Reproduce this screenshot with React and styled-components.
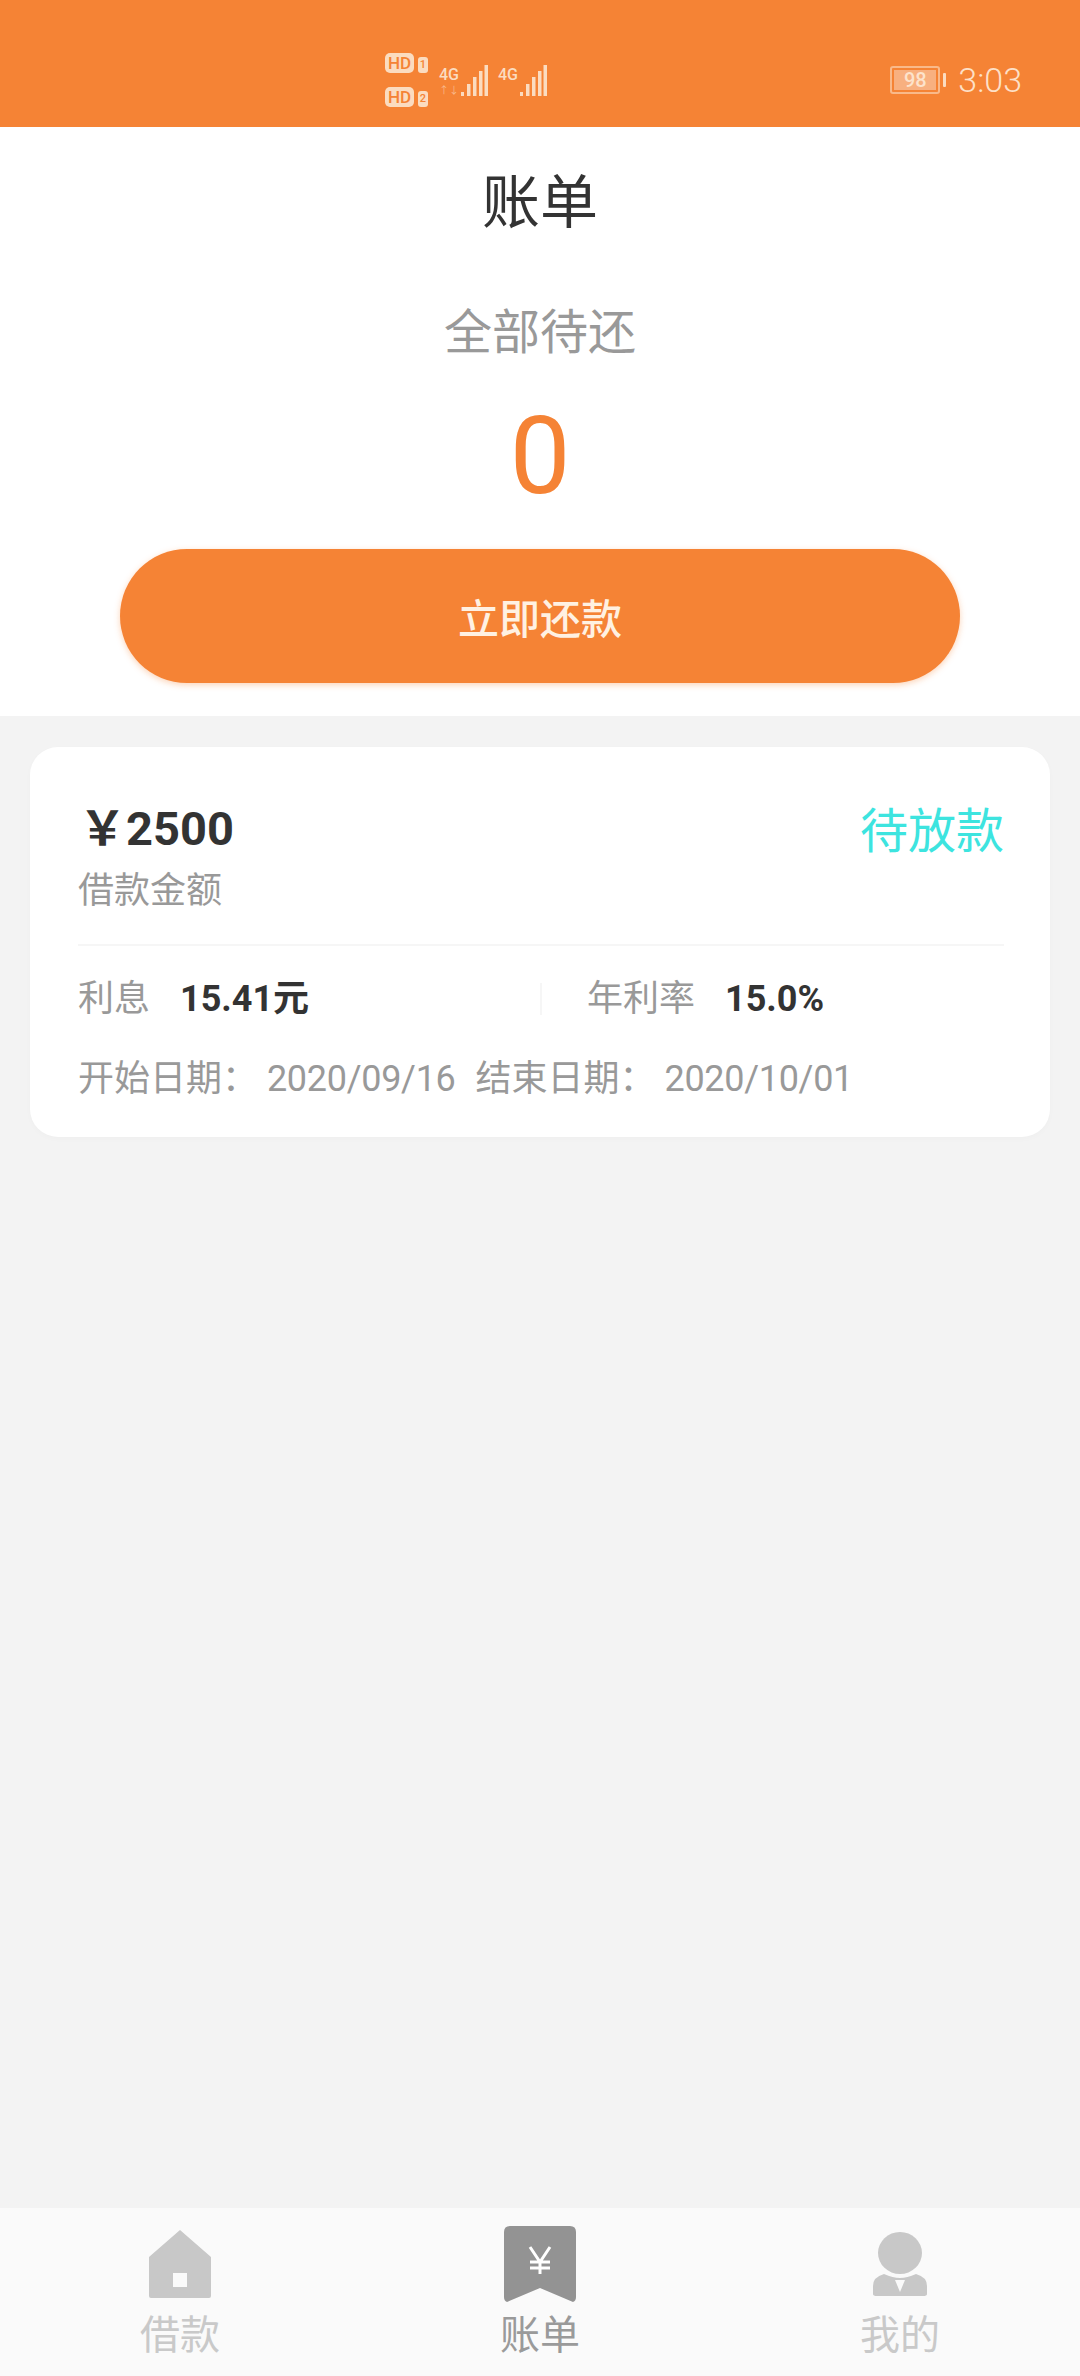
import React from "react";
import styled, { createGlobalStyle } from "styled-components";

const GlobalStyle = createGlobalStyle`
  html, body {
    margin: 0;
    padding: 0;
    background: #f3f3f3;
    font-family: Roboto, "Noto Sans CJK SC", sans-serif;
  }
`;

const ORANGE = "#f58335";

const Page = styled.div`
  width: 1080px;
  height: 2376px;
  display: flex;
  flex-direction: column;
  overflow: hidden;
`;

const StatusBar = styled.div`
  height: 127px;
  flex-shrink: 0;
  background: ${ORANGE};
  display: flex;
  align-items: center;
  justify-content: space-between;
  padding: 33px 58px 0 385px;
  box-sizing: border-box;
  color: #fbdcc0;
`;

const StatusLeft = styled.div`
  display: flex;
  align-items: center;
  gap: 11px;
`;

const SimColumn = styled.div`
  display: flex;
  flex-direction: column;
  gap: 14px;
  margin-right: 1px;
`;

const SimRow = styled.div`
  display: flex;
  align-items: flex-end;
  gap: 4px;
`;

const HdBadge = styled.span`
  width: 29px;
  height: 20px;
  border-radius: 5px;
  background: #fbdcc0;
  color: ${ORANGE};
  font-size: 17px;
  font-weight: 500;
  line-height: 20px;
  text-align: center;
`;

const SimNumber = styled.span`
  width: 10px;
  height: 16px;
  border-radius: 3px;
  background: #fbdcc0;
  color: ${ORANGE};
  font-size: 11px;
  font-weight: 500;
  line-height: 16px;
  text-align: center;
`;

const Signal = styled.div`
  display: flex;
  align-items: flex-start;
  gap: 3px;
  padding-top: 2px;
`;

const NetStack = styled.div`
  display: flex;
  flex-direction: column;
  align-items: center;
  width: 18px;
  padding-top: 2px;
`;

const NetLabel = styled.span`
  font-size: 16px;
  font-weight: 500;
  line-height: 16px;
`;

const NetActivity = styled.span`
  margin-top: 3px;
  font-size: 10px;
  line-height: 10px;
  color: #f9b98a;
`;

const StatusRight = styled.div`
  display: flex;
  align-items: center;
  gap: 12px;
`;

const Battery = styled.div`
  display: flex;
  align-items: center;
  gap: 3px;
`;

const BatteryBody = styled.div`
  width: 50px;
  height: 28px;
  box-sizing: border-box;
  padding: 2px;
  border: 2px solid #f9b98a;
  border-radius: 3px;
`;

const BatteryFill = styled.div`
  height: 100%;
  background: #f8b080;
  color: #fde3cc;
  font-size: 20px;
  font-weight: 500;
  line-height: 20px;
  text-align: center;
`;

const BatteryTip = styled.div`
  width: 3px;
  height: 14px;
  border-radius: 1px;
  background: #fbdcc0;
`;

const Clock = styled.span`
  font-size: 34px;
  font-weight: 300;
  line-height: 40px;
  color: #fde0c8;
`;

const Summary = styled.section`
  height: 589px;
  flex-shrink: 0;
  background: #fff;
  display: flex;
  flex-direction: column;
  align-items: center;
`;

const Title = styled.h1`
  margin: 43px 0 0;
  font-size: 58px;
  font-weight: 400;
  line-height: 66px;
  color: #333;
`;

const SummaryLabel = styled.div`
  margin-top: 67px;
  font-size: 48px;
  font-weight: 400;
  line-height: 60px;
  color: #999;
`;

const SummaryAmount = styled.div`
  margin-top: 30px;
  font-size: 108px;
  font-weight: 400;
  line-height: 126px;
  color: ${ORANGE};
`;

const PayButton = styled.button`
  width: 840px;
  height: 134px;
  margin-top: 30px;
  flex-shrink: 0;
  border: none;
  border-radius: 67px;
  background: ${ORANGE};
  box-shadow: 0 2px 6px rgba(245, 131, 53, 0.35);
  color: #fff1e2;
  font-family: inherit;
  font-size: 41px;
  font-weight: 500;
  padding: 0;
`;

const List = styled.main`
  flex: 1;
  padding: 31px 30px 0;
`;

const Card = styled.article`
  height: 390px;
  box-sizing: border-box;
  padding: 50px 46px 0 48px;
  background: #fff;
  border-radius: 28px;
  box-shadow: 0 2px 6px rgba(0, 0, 0, 0.02);
`;

const CardTop = styled.div`
  display: flex;
  justify-content: space-between;
  align-items: flex-start;
  padding-bottom: 30px;
  border-bottom: 2px solid #f6f6f6;
`;

const Amount = styled.div`
  font-size: 47px;
  font-weight: 700;
  line-height: 64px;
  color: #333;
  margin-left: -4px;
  padding-left: 5px;
`;

const AmountLabel = styled.div`
  margin-top: 7px;
  font-size: 36px;
  line-height: 46px;
  color: #999;
`;

const Status = styled.div`
  padding-top: 3px;
  font-size: 48px;
  line-height: 64px;
  color: #3de4df;
`;

const InfoRow = styled.div`
  display: flex;
  align-items: center;
  height: 76px;
  margin-top: 15px;
`;

const InfoCell = styled.div`
  display: flex;
  align-items: baseline;
  gap: ${(props) => props.$gap}px;
  width: ${(props) => props.$width}px;
  height: 32px;
  line-height: 32px;
  box-sizing: border-box;
  font-size: 36px;
  color: #999;
  white-space: nowrap;
  border-left: ${(props) => (props.$divided ? "2px solid #f6f6f6" : "none")};
  padding-left: ${(props) => (props.$divided ? 45 : 0)}px;
`;

const InfoValue = styled.b`
  font-weight: 700;
  font-size: 36px;
  color: #333;
`;

const DateRow = styled.div`
  display: flex;
  margin-top: 19px;
  font-size: 36px;
  line-height: 46px;
  color: #999;
  white-space: nowrap;
`;

const DateItem = styled.span`
  margin-right: 20px;
`;

const DateValue = styled.span`
  letter-spacing: -0.3px;
`;

const TabBar = styled.nav`
  height: 168px;
  flex-shrink: 0;
  background: #fafafa;
  display: grid;
  grid-template-columns: repeat(3, 1fr);
`;

const TabItem = styled.div`
  display: flex;
  flex-direction: column;
  align-items: center;
  height: 100%;
  padding-top: 16px;
  box-sizing: border-box;
`;

const TabIconSlot = styled.div`
  height: 80px;
  display: flex;
  align-items: center;
  justify-content: center;
`;

const TabLabel = styled.span`
  margin-top: 7px;
  font-size: 40px;
  line-height: 50px;
  color: ${(props) => (props.$active ? "#9a9a9a" : "#c9c9c9")};
`;

const SignalBars = () => (
  <svg width="27" height="32" viewBox="0 0 27 32">
    <rect x="0" y="27" width="3" height="4" fill="#fbdcc0" />
    <rect x="6" y="19" width="3.5" height="12" fill="#fbdcc0" />
    <rect x="12" y="12" width="3.5" height="19" fill="#fbdcc0" />
    <rect x="18" y="6" width="3.5" height="25" fill="#fbdcc0" />
    <rect x="23.5" y="0" width="3.5" height="31" fill="#fbdcc0" />
  </svg>
);

const HomeIcon = () => (
  <svg width="62" height="68" viewBox="0 0 62 68">
    <path
      fillRule="evenodd"
      d="M31 0 L62 27 V66 Q62 68 60 68 H2 Q0 68 0 66 V27 Z M24 43 V57 H38 V43 Z"
      fill="#c8c8c8"
    />
  </svg>
);

const BillIcon = () => (
  <svg width="72" height="77" viewBox="0 0 72 77">
    <path
      d="M6 0 H66 Q72 0 72 6 V71 Q72 75 69 76 L36 62 L3 76 Q0 75 0 71 V6 Q0 0 6 0 Z"
      fill="#939393"
    />
    <path
      d="M26 21 L36 36 L46 21 M36 36 V48 M26 36 H46 M26 42 H46"
      fill="none"
      stroke="#fff"
      strokeWidth="3"
    />
  </svg>
);

const PersonIcon = () => (
  <svg width="54" height="64" viewBox="0 0 54 64">
    <ellipse cx="27" cy="21" rx="22" ry="21" fill="#c8c8c8" />
    <path
      d="M11 42 Q20 46 27 46 Q34 46 43 42 Q54 45 54 54 V62 Q54 64 50 64 H4 Q0 64 0 62 V54 Q0 45 11 42 Z"
      fill="#c8c8c8"
    />
    <path d="M22 48 H32 L27 60 Z" fill="#fafafa" />
  </svg>
);

const tabs = [
  { label: "借款", icon: <HomeIcon /> },
  { label: "账单", icon: <BillIcon />, active: true },
  { label: "我的", icon: <PersonIcon /> },
];

export default function App() {
  return (
    <Page>
      <GlobalStyle />
      <StatusBar>
        <StatusLeft>
          <SimColumn>
            <SimRow>
              <HdBadge>HD</HdBadge>
              <SimNumber>1</SimNumber>
            </SimRow>
            <SimRow>
              <HdBadge>HD</HdBadge>
              <SimNumber>2</SimNumber>
            </SimRow>
          </SimColumn>
          <Signal>
            <NetStack>
              <NetLabel>4G</NetLabel>
              <NetActivity>↑↓</NetActivity>
            </NetStack>
            <SignalBars />
          </Signal>
          <Signal>
            <NetStack>
              <NetLabel>4G</NetLabel>
            </NetStack>
            <SignalBars />
          </Signal>
        </StatusLeft>
        <StatusRight>
          <Battery>
            <BatteryBody>
              <BatteryFill>98</BatteryFill>
            </BatteryBody>
            <BatteryTip />
          </Battery>
          <Clock>3:03</Clock>
        </StatusRight>
      </StatusBar>

      <Summary>
        <Title>账单</Title>
        <SummaryLabel>全部待还</SummaryLabel>
        <SummaryAmount>0</SummaryAmount>
        <PayButton type="button">立即还款</PayButton>
      </Summary>

      <List>
        <Card>
          <CardTop>
            <div>
              <Amount>￥2500</Amount>
              <AmountLabel>借款金额</AmountLabel>
            </div>
            <Status>待放款</Status>
          </CardTop>
          <InfoRow>
            <InfoCell $width={462} $gap={30}>
              利息
              <InfoValue>15.41元</InfoValue>
            </InfoCell>
            <InfoCell $divided $width={400} $gap={30}>
              年利率
              <InfoValue>15.0%</InfoValue>
            </InfoCell>
          </InfoRow>
          <DateRow>
            <DateItem>
              开始日期： <DateValue>2020/09/16</DateValue>
            </DateItem>
            <DateItem>
              结束日期： <DateValue>2020/10/01</DateValue>
            </DateItem>
          </DateRow>
        </Card>
      </List>

      <TabBar>
        {tabs.map((tab) => (
          <TabItem key={tab.label}>
            <TabIconSlot>{tab.icon}</TabIconSlot>
            <TabLabel $active={tab.active}>{tab.label}</TabLabel>
          </TabItem>
        ))}
      </TabBar>
    </Page>
  );
}
